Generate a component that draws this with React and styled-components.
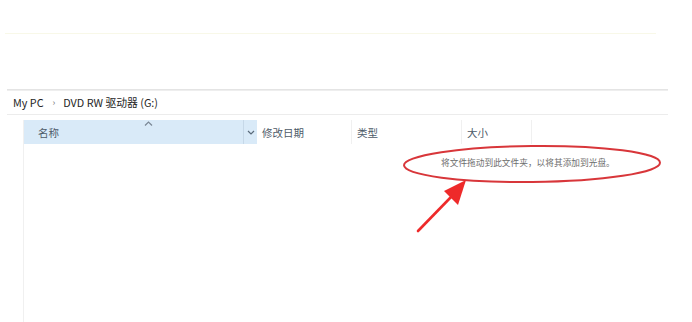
import styled, { createGlobalStyle } from 'styled-components';

const Global = createGlobalStyle`
  html, body { margin: 0; padding: 0; background: #fff; }
  body { font-family: 'Noto Sans CJK SC', 'Noto Sans', sans-serif; }
`

const columns = [
  { label: '修改日期', width: 95 },
  { label: '类型', width: 110 },
  { label: '大小', width: 70 },
]

const App = () => {
  return (
    <Page>
      <Global />
      <Ribbon>
        <RibbonLine />
      </Ribbon>

      <AddressBar>
        <Crumb>My PC</Crumb>
        <Sep>›</Sep>
        <Crumb>DVD RW 驱动器 (G:)</Crumb>
      </AddressBar>

      <Content>
        <HeaderRow>
          <NameCol>
            <SortCaret>
              <svg width="9" height="5" viewBox="0 0 9 5">
                <path d="M1 4.5 L4.5 1 L8 4.5" fill="none" stroke="#7a8795" strokeWidth="1.2" />
              </svg>
            </SortCaret>
            <ColText>名称</ColText>
            <Dropdown>
              <svg width="8" height="5" viewBox="0 0 8 5">
                <path d="M1 1 L4 4 L7 1" fill="none" stroke="#5a6a7a" strokeWidth="1.2" />
              </svg>
            </Dropdown>
          </NameCol>
          {columns.map((c) => (
            <Col key={c.label} $w={c.width}>
              <ColText>{c.label}</ColText>
            </Col>
          ))}
        </HeaderRow>

        <EmptyRow>
          <EmptyText>将文件拖动到此文件夹，以将其添加到光盘。</EmptyText>
        </EmptyRow>

        <Annotation width="692" height="322" viewBox="0 0 692 322">
          <ellipse cx="532" cy="164" rx="128" ry="18" fill="none" stroke="#d8363a" strokeWidth="2"
            transform="rotate(-0.6 532 164)" />
          <line x1="418" y1="231" x2="452" y2="196" stroke="#ee2a2a" strokeWidth="2.6" strokeLinecap="round" />
          <polygon points="466,180 444,191 458,205" fill="#ee2a2a" />
        </Annotation>
      </Content>
    </Page>
  )
}

const Page = styled.div`
  position: relative;
  width: 692px;
  height: 322px;
  background: #fff;
  overflow: hidden;
`

const Ribbon = styled.div`
  height: 89px;
  padding-top: 33px;
  box-sizing: border-box;
  margin-right: 22px;
`

const RibbonLine = styled.div`
  margin-left: 5px;
  margin-right: 14px;
  border-top: 1px solid #f8f8e8;
`

const AddressBar = styled.div`
  display: flex;
  align-items: center;
  height: 24px;
  margin-left: 7px;
  margin-right: 24px;
  padding-left: 6px;
  border-top: 1px solid #e4e4e4;
  border-bottom: 1px solid #ececec;
  box-shadow: inset 0 5px 0 -4px #eee;
  font-size: 10.8px;
  color: #262626;
`

const Crumb = styled.span`
  white-space: nowrap;
`

const Sep = styled.span`
  margin: 0 8px 0 9px;
  color: #777;
  font-size: 9px;
`

const Content = styled.div`
  margin-top: 5px;
  margin-left: 23px;
  height: 220px;
  border-left: 1px solid #f0f0f0;
`

const HeaderRow = styled.div`
  display: flex;
  height: 24px;
`

const NameCol = styled.div`
  position: relative;
  display: flex;
  align-items: center;
  width: 233px;
  padding-left: 14px;
  box-sizing: border-box;
  background: #d9eaf8;
`

const SortCaret = styled.div`
  position: absolute;
  top: 1px;
  left: 120px;
  display: flex;
`

const Dropdown = styled.div`
  margin-left: auto;
  width: 13px;
  height: 100%;
  display: flex;
  align-items: center;
  justify-content: center;
  border-left: 1px solid #c6d8e8;
`

const Col = styled.div`
  display: flex;
  align-items: center;
  width: ${(p) => p.$w}px;
  padding-left: 5px;
  box-sizing: border-box;
  border-right: 1px solid #f0f0f0;
`

const ColText = styled.span`
  font-size: 10.5px;
  color: #4d5a68;
  white-space: nowrap;
`

const EmptyRow = styled.div`
  display: flex;
  padding-left: 417px;
  padding-top: 12px;
`

const EmptyText = styled.span`
  font-size: 8.7px;
  color: #6d6d6d;
  white-space: nowrap;
`

const Annotation = styled.svg`
  position: absolute;
  left: 0;
  top: 0;
  pointer-events: none;
`

export default App
